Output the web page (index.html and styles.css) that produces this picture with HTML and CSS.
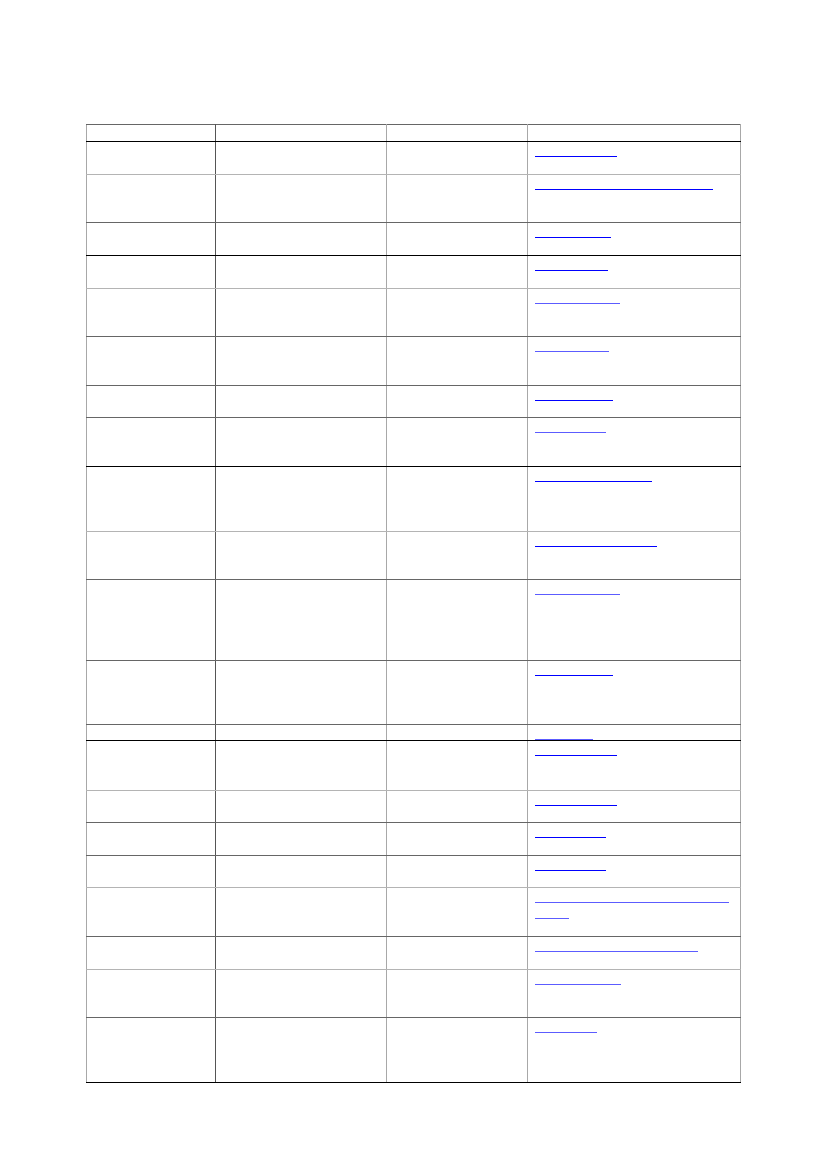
FILE: index.html
```html
<!DOCTYPE html>
<html lang="en">
<head>
<meta charset="utf-8">
<title>Table</title>
<link rel="stylesheet" href="styles.css">
</head>
<body>
<table class="grid">
  <colgroup>
    <col class="c1"><col class="c2"><col class="c3"><col class="c4">
  </colgroup>
  <tr class="h16 bk first"><td></td><td></td><td></td><td></td></tr>
  <tr class="h32 lt"><td></td><td></td><td></td><td><a class="ln" href="#" style="width:82px"></a></td></tr>
  <tr class="h47 dk"><td></td><td></td><td></td><td><a class="ln" href="#" style="width:178px"></a></td></tr>
  <tr class="h32 bk"><td></td><td></td><td></td><td><a class="ln" href="#" style="width:76px"></a></td></tr>
  <tr class="h32 lt"><td></td><td></td><td></td><td><a class="ln" href="#" style="width:73px"></a></td></tr>
  <tr class="h47 dk"><td></td><td></td><td></td><td><a class="ln soft" href="#" style="width:85px"></a></td></tr>
  <tr class="h48 dk"><td></td><td></td><td></td><td><a class="ln soft" href="#" style="width:74px"></a></td></tr>
  <tr class="h31 dk"><td></td><td></td><td></td><td><a class="ln" href="#" style="width:78px"></a></td></tr>
  <tr class="h48 bk"><td></td><td></td><td></td><td><a class="ln soft" href="#" style="width:71px"></a></td></tr>
  <tr class="h64 lt"><td></td><td></td><td></td><td><a class="ln" href="#" style="width:117px"></a></td></tr>
  <tr class="h47 dk"><td></td><td></td><td></td><td><a class="ln" href="#" style="width:122px"></a></td></tr>
  <tr class="h80 dk"><td></td><td></td><td></td><td><a class="ln soft" href="#" style="width:85px"></a></td></tr>
  <tr class="h63 dk"><td></td><td></td><td></td><td><a class="ln" href="#" style="width:78px"></a></td></tr>
  <tr class="h15 bk"><td></td><td></td><td></td><td><a class="ln soft" href="#" style="width:58px"></a></td></tr>
  <tr class="h49 lt"><td></td><td></td><td></td><td><a class="ln" href="#" style="width:82px"></a></td></tr>
  <tr class="h31 dk"><td></td><td></td><td></td><td><a class="ln" href="#" style="width:82px"></a></td></tr>
  <tr class="h32 dk"><td></td><td></td><td></td><td><a class="ln" href="#" style="width:71px"></a></td></tr>
  <tr class="h31 lt"><td></td><td></td><td></td><td><a class="ln" href="#" style="width:71px"></a></td></tr>
  <tr class="h48 dk"><td></td><td></td><td></td><td><a class="ln soft" href="#" style="width:194px"></a><a class="ln ln2 soft" href="#" style="width:34px"></a></td></tr>
  <tr class="h32 lt"><td></td><td></td><td></td><td><a class="ln soft" href="#" style="width:163px"></a></td></tr>
  <tr class="h47 dk"><td></td><td></td><td></td><td><a class="ln soft" href="#" style="width:86px"></a></td></tr>
  <tr class="h64 bk"><td></td><td></td><td></td><td><a class="ln soft" href="#" style="width:62px"></a></td></tr>
</table>
</body>
</html>
```
FILE: styles.css
```css
html, body {
  margin: 0;
  padding: 0;
  background: #ffffff;
}
body {
  font-family: "Liberation Sans", Arial, sans-serif;
  font-size: 13px;
  line-height: 16px;
}
.grid {
  border-collapse: collapse;
  table-layout: fixed;
  margin: 124px 0 0 86px;
  width: 654px;
}
.c1 { width: 129px; }
.c2 { width: 171px; }
.c3 { width: 141px; }
.c4 { width: 213px; }
.grid td {
  padding: 0 7px;
  vertical-align: top;
  border: none;
  border-bottom: 1px solid #666666;
  border-right: 1px solid #a8a8a8;
}
.grid td:first-child {
  border-left: 1px solid #a8a8a8;
  border-right-color: #555555;
}
.first td { border-top: 1px solid #666666; }
.bk td { border-bottom-color: #000000; }
.dk td { border-bottom-color: #666666; }
.lt td { border-bottom-color: #b4b4b4; }
.h15 td { height: 15px; }
.h16 td { height: 16px; }
.h31 td { height: 31px; }
.h32 td { height: 32px; }
.h47 td { height: 47px; }
.h48 td { height: 48px; }
.h49 td { height: 49px; }
.h63 td { height: 63px; }
.h64 td { height: 64px; }
.h80 td { height: 80px; }
.ln {
  display: block;
  height: 14px;
  border-bottom: 1px solid #0000ff;
  text-decoration: none;
}
.ln2 { height: 15px; }
.soft { border-bottom-color: #5c5cff; }
```
